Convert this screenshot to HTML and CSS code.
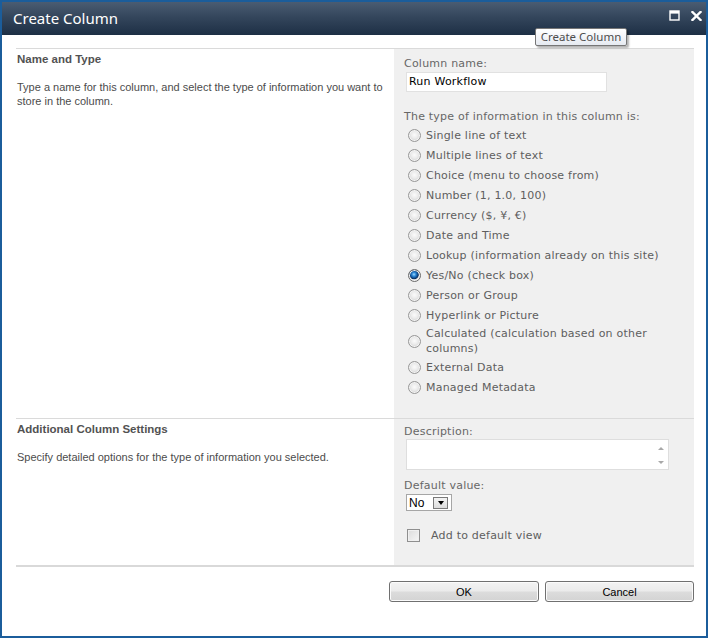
FILE: index.html
```html
<!DOCTYPE html>
<html lang="en">
<head>
<meta charset="utf-8">
<title>Create Column</title>
<link rel="stylesheet" href="styles.css">
</head>
<body>
<div class="window">
  <div class="titlebar">
    <span class="title">Create Column</span>
    <div class="controls">
      <svg class="ctl" width="11" height="11" viewBox="0 0 11 11"><rect x="1" y="1" width="9" height="9" fill="none" stroke="#fff" stroke-width="1.4"/><rect x="1" y="1" width="9" height="2.6" fill="#fff"/></svg>
      <svg class="ctl" width="11" height="10" viewBox="0 0 11 10"><path d="M1.5 1 L9.5 9 M9.5 1 L1.5 9" stroke="#fff" stroke-width="2.4" stroke-linecap="square"/></svg>
    </div>
  </div>
  <div class="body">
    <div class="section">
      <div class="desc">
        <h3 class="heading">Name and Type</h3>
        <p class="text">Type a name for this column, and select the type of information you want to store in the column.</p>
      </div>
      <div class="fields fields-1">
        <div class="label">Column name:</div>
        <div class="input">Run Workflow</div>
        <div class="label type-label">The type of information in this column is:</div>
        <ul class="options">
          <li class="option"><span class="radio"></span><span>Single line of text</span></li>
          <li class="option"><span class="radio"></span><span>Multiple lines of text</span></li>
          <li class="option"><span class="radio"></span><span>Choice (menu to choose from)</span></li>
          <li class="option"><span class="radio"></span><span>Number (1, 1.0, 100)</span></li>
          <li class="option"><span class="radio"></span><span>Currency ($, ¥, €)</span></li>
          <li class="option"><span class="radio"></span><span>Date and Time</span></li>
          <li class="option"><span class="radio"></span><span>Lookup (information already on this site)</span></li>
          <li class="option"><span class="radio checked"></span><span>Yes/No (check box)</span></li>
          <li class="option"><span class="radio"></span><span>Person or Group</span></li>
          <li class="option"><span class="radio"></span><span>Hyperlink or Picture</span></li>
          <li class="option option-wrap"><span class="radio"></span><span>Calculated (calculation based on other columns)</span></li>
          <li class="option"><span class="radio"></span><span>External Data</span></li>
          <li class="option"><span class="radio"></span><span>Managed Metadata</span></li>
        </ul>
      </div>
    </div>
    <div class="section">
      <div class="desc">
        <h3 class="heading">Additional Column Settings</h3>
        <p class="text">Specify detailed options for the type of information you selected.</p>
      </div>
      <div class="fields fields-2">
        <div class="label">Description:</div>
        <div class="textarea">
          <div class="scroll">
            <span class="arrow up"></span>
            <span class="arrow down"></span>
          </div>
        </div>
        <div class="label default-label">Default value:</div>
        <div class="select"><span class="select-value">No</span><span class="drop"><span class="tri"></span></span></div>
        <div class="check-row"><span class="checkbox"></span><span>Add to default view</span></div>
      </div>
    </div>
    <div class="footer">
      <button class="btn btn-ok">OK</button>
      <button class="btn btn-cancel">Cancel</button>
    </div>
  </div>
  <div class="tooltip">Create Column</div>
</div>
</body>
</html>
```

FILE: styles.css
```css
* { box-sizing: border-box; }
html, body { margin: 0; padding: 0; background: #fff; }
body { font-family: "DejaVu Sans", Verdana, sans-serif; }

.window {
  position: relative;
  width: 708px;
  height: 638px;
  border: 2px solid #1b5d9b;
  background: #fff;
  display: flex;
  flex-direction: column;
}

.titlebar {
  height: 33px;
  flex: none;
  background: linear-gradient(#4a5c72, #34465c 45%, #1d2f45);
  display: flex;
  align-items: center;
  justify-content: space-between;
  padding: 0 4px 0 11px;
}
.title {
  color: #fff;
  font-family: "Noto Sans", "Open Sans", sans-serif;
  font-size: 15px;
  line-height: 20px;
  padding-bottom: 1px;
}
.controls {
  display: flex;
  gap: 11px;
  align-items: center;
  align-self: flex-start;
  padding-top: 8px;
}
.ctl { display: block; }

.body {
  flex: 1;
  padding: 13px 12px 0 14px;
}

.section {
  display: grid;
  grid-template-columns: 378px 300px;
  border-top: 1px solid #dadada;
}

.desc {
  padding: 3px 0 0 1px;
  font-family: "Liberation Sans", Tahoma, sans-serif;
}
.heading {
  margin: 0;
  font-size: 11.5px;
  line-height: 14px;
  font-weight: bold;
  color: #525252;
}
.text {
  margin: 14px 0 0;
  font-size: 11px;
  line-height: 14px;
  color: #4c4c4c;
}

.fields {
  background: #f0f0f0;
  padding: 6px 10px 21px 10px;
  font-size: 11px;
  letter-spacing: 0.22px;
  color: #676767;
}
.fields-1 { padding: 8px 10px 21px 10px; }
.label { line-height: 14px; }
.input {
  margin: 1px 0 0 2px;
  width: 201px;
  height: 20px;
  border: 1px solid #e1e1e1;
  background: #fff;
  color: #000;
  line-height: 18px;
  padding-left: 2px;
}
.type-label { margin-top: 18px; }

.options {
  list-style: none;
  margin: 1px 0 0;
  padding: 0;
}
.option {
  display: flex;
  align-items: center;
  gap: 5px;
  height: 20px;
  padding-left: 4px;
  color: #5e5e5e;
  line-height: 15px;
}
.option-wrap {
  height: 32px;
}
.radio {
  flex: none;
  width: 13px;
  height: 13px;
  border-radius: 50%;
  border: 1px solid #979797;
  background: radial-gradient(circle at 50% 45%, #fbfbfb 0, #ececec 40%, #d2d2d2 75%, #c4c4c4 100%);
  box-shadow: inset 0 0 0 1px #f4f4f4;
}
.radio.checked {
  border-color: #6a6a6a;
  background: radial-gradient(circle at 45% 40%, #9fdcff 0, #2a86d6 22%, #0d4888 42%, #0a2f5e 50%, #d8d8d8 58%, #f2f2f2 75%, #cfcfcf 100%);
}

.textarea {
  margin-left: 2px;
  width: 263px;
  height: 31px;
  border: 1px solid #dedede;
  background: #fff;
  display: flex;
  justify-content: flex-end;
}
.scroll {
  width: 14px;
  display: flex;
  flex-direction: column;
  justify-content: space-between;
  align-items: center;
  padding: 7px 0 5px;
}
.arrow {
  width: 0;
  height: 0;
  border-left: 3px solid transparent;
  border-right: 3px solid transparent;
}
.arrow.up { border-bottom: 3px solid #a8a8a8; }
.arrow.down { border-top: 3px solid #a8a8a8; }

.default-label { margin-top: 9px; }
.select {
  margin: 1px 0 0 2px;
  width: 46px;
  height: 17px;
  border: 1px solid #a6a6a6;
  background: #fff;
  display: flex;
  align-items: center;
  justify-content: space-between;
  padding: 0 3px 0 2px;
  letter-spacing: 0;
}
.select-value {
  font-family: "Liberation Sans", Arial, sans-serif;
  font-size: 12px;
  color: #000;
  line-height: 14px;
}
.drop {
  width: 15px;
  height: 12px;
  border: 1px solid #7a7a7a;
  background: linear-gradient(#f4f4f4, #dcdcdc);
  display: flex;
  align-items: center;
  justify-content: center;
}
.tri {
  width: 0;
  height: 0;
  border-left: 3.5px solid transparent;
  border-right: 3.5px solid transparent;
  border-top: 4px solid #000;
}

.check-row {
  margin-top: 15px;
  height: 18px;
  display: flex;
  align-items: center;
  gap: 11px;
  padding-left: 3px;
  color: #5e5e5e;
}
.checkbox {
  width: 13px;
  height: 13px;
  border: 1px solid #8f8f8f;
  background: linear-gradient(135deg, #dcdcdc, #f6f6f6);
  box-shadow: inset 0 0 0 1px #f0f0f0;
}

.footer {
  border-top: 2px solid #d9d9d9;
  padding-top: 14px;
  display: flex;
  justify-content: flex-end;
  gap: 6px;
}
.btn {
  height: 21px;
  border: 1px solid #707070;
  border-radius: 3px;
  background: linear-gradient(#f3f3f3 0, #ebebeb 48%, #dcdcdc 52%, #d3d3d3 100%);
  font-family: "Liberation Sans", Arial, sans-serif;
  font-size: 11px;
  color: #000;
  padding: 0;
  box-shadow: inset 0 0 0 1px #fbfbfb;
}
.btn-ok { width: 150px; }
.btn-cancel { width: 149px; }

.tooltip {
  position: absolute;
  left: 533px;
  top: 26px;
  width: 92px;
  height: 18px;
  border: 1px solid #767676;
  border-radius: 2px;
  background: linear-gradient(#ffffff, #e6eaf1);
  box-shadow: 2px 2px 2px rgba(0,0,0,0.3);
  font-family: "Noto Sans", "Open Sans", sans-serif;
  font-size: 11.5px;
  line-height: 15px;
  color: #4d4d4d;
  text-align: center;
}
```
